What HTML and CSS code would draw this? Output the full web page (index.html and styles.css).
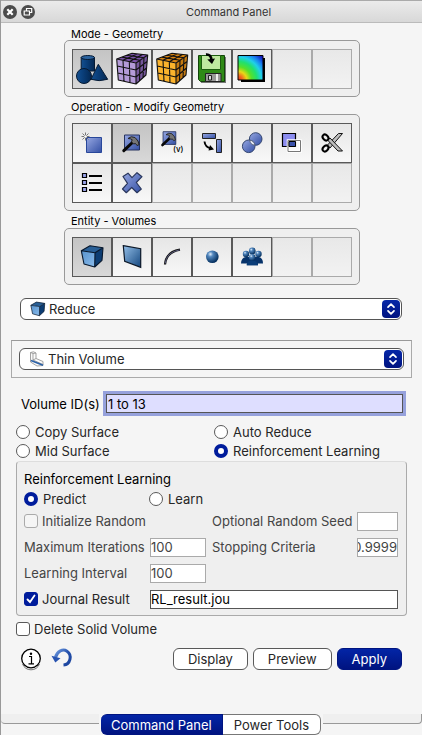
FILE: index.html
```html
<!DOCTYPE html>
<html lang="en">
<head>
<meta charset="utf-8">
<meta name="viewport" content="width=device-width, initial-scale=1">
<title>Command Panel</title>
<link rel="stylesheet" href="styles.css">
</head>
<body>
<svg class="defs" aria-hidden="true">
  <defs>
    <linearGradient id="navy" x1="0" y1="0" x2="1" y2="0"><stop offset="0" stop-color="#15508f"/><stop offset=".35" stop-color="#0b417e"/><stop offset="1" stop-color="#032752"/></linearGradient>
    <linearGradient id="peri" x1="0" y1="0" x2="1" y2="1"><stop offset="0" stop-color="#97a8e2"/><stop offset="1" stop-color="#334fa4"/></linearGradient>
    <linearGradient id="steel" x1="0" y1="0" x2="1" y2="1"><stop offset="0" stop-color="#94bfe8"/><stop offset="1" stop-color="#14477f"/></linearGradient>
    <linearGradient id="face" x1="0" y1="0" x2="1" y2="1"><stop offset="0" stop-color="#5792cc"/><stop offset="1" stop-color="#8bbcec"/></linearGradient>
    <radialGradient id="ball" cx=".35" cy=".3" r=".7"><stop offset="0" stop-color="#e3f0fc"/><stop offset=".3" stop-color="#5287be"/><stop offset="1" stop-color="#05305f"/></radialGradient>
    <radialGradient id="rainbow" cx="0" cy="1" r="1.35"><stop offset="0" stop-color="#e8281c"/><stop offset=".13" stop-color="#f06a20"/><stop offset=".26" stop-color="#e8d818"/><stop offset=".4" stop-color="#58e028"/><stop offset=".56" stop-color="#20e070"/><stop offset=".7" stop-color="#20d0e8"/><stop offset=".84" stop-color="#1880f0"/><stop offset="1" stop-color="#1010b8"/></radialGradient>
    <linearGradient id="undo" x1="0" y1="0" x2="1" y2="1"><stop offset="0" stop-color="#6f9be0"/><stop offset=".5" stop-color="#2450ac"/><stop offset="1" stop-color="#1a439c"/></linearGradient>
    <symbol id="block" viewBox="8 7 25 25">
      <path d="M9.3 13.7 18 8.7 31 10.7 23 15.7Z" fill="#295f96"/>
      <path d="M9.3 13.7 23 15.7 22.7 30 12 27Z" fill="url(#face)"/>
      <path d="M23 15.7 31 10.7 30 23.3 22.7 30Z" fill="#0d3d73"/>
      <path d="M9.3 13.7 18 8.7 31 10.7 30 23.3 22.7 30 12 27ZM9.3 13.7 23 15.7 31 10.7M23 15.7 22.7 30" fill="none" stroke="#07172c" stroke-width="1.1" stroke-linejoin="round"/>
    </symbol>
    <symbol id="meshlines" viewBox="0 0 40 40">
      <path d="M4.7 10 20 4.3 35.7 6 34 26 24 35 6.3 31ZM4.7 10 24 14 35.7 6M24 14V35M11 11.3 12 32.3M17.3 12.7 18 33.7M5.2 17 24 21 35.1 12.5M5.8 24 24 28 34.5 19M28 11.3 27.5 32M32 8.7 31 29M9.8 8.1 28 11.3M14.9 6.2 32 8.7M11 11.3 25.2 4.9M17.3 12.7 30.4 5.4" fill="none" stroke="#111" stroke-width="1.1" stroke-linejoin="round"/>
    </symbol>
    <symbol id="hammer" viewBox="0 0 20 20">
      <path d="M3 2H18V17H3Z" fill="url(#peri)" stroke="#26335f" stroke-width="1"/>
      <path d="M2.300 17.700 12 8.500" stroke="#080808" stroke-width="3" stroke-linecap="round"/>
      <path d="M6.500 5.500Q9.500 2.500 13.500 4.500L16.500 8 17.600 11.700 15.500 12.500 14 10.500 12 11 10 8.800 10.700 6.700Q9 5.500 6.500 5.500Z" fill="#757575" stroke="#222" stroke-width="1"/>
    </symbol>
    <symbol id="updown" viewBox="0 0 18 18">
      <path d="M6 7.2 9 4.2 12 7.2M6 10.8 9 13.8 12 10.8" fill="none" stroke="#fff" stroke-width="1.7" stroke-linecap="round" stroke-linejoin="round"/>
    </symbol>
  </defs>
</svg>

<main class="panel">
  <header class="titlebar">
    <div class="window-tools">
      <button type="button" aria-label="Close"><svg viewBox="0 0 14 14"><circle cx="7" cy="7" r="7" fill="#4b4b4b"/><path d="M4.3 4.3 9.7 9.7M9.7 4.3 4.3 9.7" stroke="#fff" stroke-width="2.2"/></svg></button>
      <button type="button" aria-label="Float"><svg viewBox="0 0 14 14"><circle cx="7" cy="7" r="7" fill="#4b4b4b"/><path d="M5.5 5.5V3.5H10.7V7.5H8.8M3.2 6H8.5V10H3.2Z" fill="none" stroke="#fff" stroke-width="1.2"/></svg></button>
    </div>
    <h1>Command Panel</h1>
  </header>

  <div class="toolgroups">
    <section class="toolgroup">
      <h2>Mode - Geometry</h2>
      <div class="cells">
        <button type="button" class="active" aria-label="Geometry"><svg viewBox="1 1 38 38"><g fill="url(#navy)" stroke="#061a33" stroke-width="1"><path d="M9.2 8.5V22H22.5V8.5Z"/><ellipse cx="15.8" cy="8.5" rx="6.7" ry="2" fill="#2a629e"/><path d="M26.3 15.3 35.7 30.3Q27 33 19 30.3Z"/><circle cx="12" cy="27" r="7.5"/></g></svg></button>
        <button type="button" aria-label="Mesh"><svg viewBox="1 1 38 38"><path d="M4.7 10 20 4.3 35.7 6 24 14Z" fill="#7a52a8"/><path d="M4.7 10 24 14V35L6.3 31Z" fill="#b49bd8"/><path d="M24 14 35.7 6 34 26 24 35Z" fill="#75579b"/><use href="#meshlines" width="40" height="40"/></svg></button>
        <button type="button" aria-label="Analysis groups"><svg viewBox="1 1 38 38"><path d="M4.7 10 20 4.3 35.7 6 24 14Z" fill="#d8830f"/><path d="M4.7 10 24 14V35L6.3 31Z" fill="#fbb32c"/><path d="M24 14 35.7 6 34 26 24 35Z" fill="#c57b12"/><use href="#meshlines" width="40" height="40"/></svg></button>
        <button type="button" aria-label="Export"><svg viewBox="1 1 38 38"><path d="M8 8H34V34H9Z" fill="#777"/><path d="M6.5 6.5H32.5V32.5H8.5L6.5 30.5Z" fill="#2f8a17" stroke="#12440a"/><path d="M9.5 6.5H28.5V20.5H9.5Z" fill="#bfe9a0" stroke="#1d5c10"/><path d="M13.5 24.5H29V32.5H13.5Z" fill="#9a9a9a" stroke="#222"/><path d="M16.5 26.5H19.5V31H16.5Z" fill="#ddd" stroke="#222"/><path d="M25 25V32" stroke="#eee" stroke-width="2"/><path d="M14 5.5Q19 5 19.5 11" fill="none" stroke="#000" stroke-width="2.6"/><path d="M15.3 10.5 23 9.5 20 15Z"/></svg></button>
        <button type="button" aria-label="Post processing"><svg viewBox="1 1 38 38"><path d="M9 9H33V33H9Z"/><path d="M6 6.5H31V31H6Z" fill="url(#rainbow)" stroke="#000"/></svg></button>
        <button type="button" disabled aria-label="Empty"></button>
        <button type="button" disabled aria-label="Empty"></button>
      </div>
    </section>

    <section class="toolgroup">
      <h2>Operation - Modify Geometry</h2>
      <div class="cells">
        <button type="button" aria-label="Create"><svg viewBox="1 1 38 38"><path d="M14.5 14.5H29.5V29.5H14.5Z" fill="url(#peri)" stroke="#28479a"/><path d="M13.5 9.5V17.5M9.5 13.5H17.5M10.5 10.5 16.5 16.5M16.5 10.5 10.5 16.5" stroke="#777"/><circle cx="13.5" cy="13.5" r="1.3" fill="#fff"/></svg></button>
        <button type="button" class="active" aria-label="Modify"><svg viewBox="1 1 38 38"><use href="#hammer" x="9.5" y="10" width="20" height="20"/></svg></button>
        <button type="button" aria-label="Modify virtual"><svg viewBox="1 1 38 38"><use href="#hammer" x="8.5" y="7" width="17" height="17"/><text x="21" y="29" class="icon-text">(v)</text></svg></button>
        <button type="button" aria-label="Transform"><svg viewBox="1 1 38 38"><g fill="url(#peri)" stroke="#222"><path d="M10.5 10.5H23.5V15.5H10.5Z"/><path d="M24.5 16.5H29.5V29.5H24.5Z"/></g><path d="M12.5 18.5Q13 24 19 25.5" fill="none" stroke="#000" stroke-width="1.9"/><path d="M18 22 22 26.500 16.5 27.5Z"/></svg></button>
        <button type="button" aria-label="Boolean"><svg viewBox="1 1 38 38"><g fill="url(#peri)" stroke="#34466f"><circle cx="23.7" cy="16" r="6.3"/><circle cx="16.7" cy="23.3" r="6.3"/></g><path d="M17.6 17.2Q22.3 17.5 22.9 22.3 18.2 21.8 17.6 17.2Z" fill="#e5e9f3" stroke="#596680"/></svg></button>
        <button type="button" aria-label="Imprint"><svg viewBox="1 1 38 38"><path d="M10.5 10.5H23.5V23.5H10.5Z" fill="#8c8df0" stroke="#000" stroke-width="1.2"/><path d="M16 17.5H28.5V28.5H16Z" fill="none" stroke="#fff" stroke-width="2.6"/><path d="M16 17.5H28.5V28.5H16Z" fill="#fff" fill-opacity=".5" stroke="#777"/><path d="M17 18.5H23.5V23.5H17Z" fill="#3a51aa" stroke="#000"/></svg></button>
        <button type="button" aria-label="Cut"><svg viewBox="1 1 38 38"><path d="M30.5 10.5 26.5 10.5 15.5 22 18 25Z" fill="#bdbdbd" stroke="#111"/><path d="M30.5 28 26 28 15.5 17 18 15Z" fill="#bdbdbd" stroke="#111"/><g fill="none" stroke="#000" stroke-width="2"><ellipse cx="13.5" cy="14.5" rx="3.3" ry="2.5" transform="rotate(45 13.5 14.5)"/><ellipse cx="13.5" cy="25.500" rx="3.3" ry="2.5" transform="rotate(-45 13.5 25.5)"/></g></svg></button>
        <button type="button" aria-label="List"><svg viewBox="1 1 38 38"><g fill="#9aa3ea" stroke="#000" stroke-width="1.2"><path d="M10.5 10.5H14.5V14.5H10.5Z"/><path d="M10.5 17.5H14.5V21.5H10.5Z"/><path d="M10.5 24.5H14.5V28.5H10.5Z"/></g><path d="M17 13H30M17 20H30M17 27H30" stroke="#000" stroke-width="1.8"/></svg></button>
        <button type="button" aria-label="Delete"><svg viewBox="1 1 38 38"><path d="M11 13.5 16 10.2 20 14.700 25 9.700 30 13.700 24.300 19.500 29.300 26 25 29.700 19.700 24.500 14.300 29.700 10.500 26 15.500 20.300Z" fill="url(#peri)" stroke="#29365c" stroke-width="1.2" stroke-linejoin="round"/></svg></button>
        <button type="button" disabled aria-label="Empty"></button>
        <button type="button" disabled aria-label="Empty"></button>
        <button type="button" disabled aria-label="Empty"></button>
        <button type="button" disabled aria-label="Empty"></button>
        <button type="button" disabled aria-label="Empty"></button>
      </div>
    </section>

    <section class="toolgroup">
      <h2>Entity - Volumes</h2>
      <div class="cells">
        <button type="button" class="active" aria-label="Volume"><svg viewBox="1 1 38 38"><use href="#block" x="8" y="7" width="25" height="25"/></svg></button>
        <button type="button" aria-label="Surface"><svg viewBox="1 1 38 38"><path d="M11.3 8.7 28.7 11.7V30.3L12.7 24.3Z" fill="url(#steel)" stroke="#0c1828" stroke-width="1.2"/></svg></button>
        <button type="button" aria-label="Curve"><svg viewBox="1 1 38 38"><path d="M13 27.5Q14 15 28 12.7" fill="none" stroke="#111" stroke-width="2.2"/><path d="M13.2 26.5Q14.2 15.2 27.5 12.9" fill="none" stroke="#6f7199" stroke-width=".8"/></svg></button>
        <button type="button" aria-label="Vertex"><svg viewBox="1 1 38 38"><circle cx="20.3" cy="19.7" r="6.3" fill="url(#ball)"/></svg></button>
        <button type="button" aria-label="Group"><svg viewBox="1 1 38 38"><path d="M9 26.5Q9.5 20 14 20H27Q31 21 31 26.5H26V28.3H15V26.5Z" fill="#07336a"/><g fill="url(#ball)"><circle cx="20.3" cy="14" r="3.4"/><circle cx="14" cy="17" r="3.2"/><circle cx="26.5" cy="17" r="3.2"/><circle cx="20.3" cy="20.5" r="3.4"/></g><path d="M14.5 28.3Q15 23.5 20.3 23.5T26 28.3Z" fill="#0a3d78"/></svg></button>
        <button type="button" disabled aria-label="Empty"></button>
        <button type="button" disabled aria-label="Empty"></button>
      </div>
    </section>
  </div>

  <form class="command">
    <div class="picker action">
      <select aria-label="Action"><option>Reduce</option></select>
      <svg class="picker-icon" viewBox="0 0 16 16"><use href="#block" width="16" height="16"/></svg>
      <svg class="picker-arrows"><use href="#updown"/></svg>
    </div>

    <div class="frame">
      <div class="picker">
        <select aria-label="Reduction type"><option>Thin Volume</option></select>
        <svg class="picker-icon" viewBox="0 0 16 16"><path d="M1.500 1.500 4.500 .8 7 2V7.500L14 10.500V14.500L8 15 1.500 11ZM1.500 1.500 4 2.500V9L14 13.500M4 2.500 7 2M4 9 7 7.500" fill="#fafafa" stroke="#999" stroke-width=".9"/><path d="M2 9.500 14 14.200" stroke="#2c62a8" stroke-width="1.6"/></svg>
        <svg class="picker-arrows"><use href="#updown"/></svg>
      </div>
    </div>

    <div class="ids">
      <label for="ids">Volume ID(s)</label>
      <input id="ids" type="text" value="1 to 13">
    </div>

    <div class="methods">
      <label class="choice"><input type="radio" name="method">Copy Surface</label>
      <label class="choice"><input type="radio" name="method">Auto Reduce</label>
      <label class="choice"><input type="radio" name="method">Mid Surface</label>
      <label class="choice"><input type="radio" name="method" checked>Reinforcement Learning</label>
    </div>

    <section class="learning">
      <h3>Reinforcement Learning</h3>
      <div class="row short">
        <label class="choice"><input type="radio" name="rl" checked>Predict</label>
        <label class="choice"><input type="radio" name="rl">Learn</label>
      </div>
      <div class="row dim">
        <label class="choice wide"><input type="checkbox" disabled>Initialize Random</label>
        <label for="seed">Optional Random Seed</label>
        <input id="seed" type="text" disabled>
      </div>
      <div class="row dim">
        <label for="iterations">Maximum Iterations</label>
        <input id="iterations" type="text" value="100" disabled>
        <label for="criteria">Stopping Criteria</label>
        <input id="criteria" class="tail" type="text" value="0.9999" disabled>
      </div>
      <div class="row dim">
        <label for="interval">Learning Interval</label>
        <input id="interval" type="text" value="100" disabled>
      </div>
      <div class="row">
        <label class="choice"><input type="checkbox" checked>Journal Result</label>
        <input class="journal" type="text" aria-label="Journal file" value="RL_result.jou">
      </div>
    </section>

    <label class="choice delete"><input type="checkbox">Delete Solid Volume</label>

    <div class="actions">
      <button type="button" class="glyph" aria-label="Information"><svg viewBox="0 0 22 24"><path d="M2.5 17Q5 22.8 11 22.8T19.5 17" fill="none" stroke="#777"/><circle cx="11" cy="11.5" r="9.3" fill="#fff" stroke="#000" stroke-width="1.3"/><circle cx="11" cy="6.7" r="1.2"/><path d="M9 9.5H11.5V16.5M8.5 16.8H14" fill="none" stroke="#000" stroke-width="1.2"/></svg></button>
      <button type="button" class="glyph undo" aria-label="Reset"><svg viewBox="0 0 22 24"><path d="M4.5 10.5C6 4 12 1.5 16 4.2C21.5 8 19.5 17.5 12.5 18" fill="none" stroke="url(#undo)" stroke-width="3"/><path d="M.5 8.8 9.5 11.2 4.3 15.5Z" fill="#2753b0"/></svg></button>
      <span class="spacer"></span>
      <button type="button" class="push">Display</button>
      <button type="button" class="push">Preview</button>
      <button type="submit" class="push primary">Apply</button>
    </div>
  </form>

  <footer class="tabs">
    <span class="edge left"></span>
    <button type="button" class="tab selected">Command Panel</button>
    <button type="button" class="tab">Power Tools</button>
    <span class="edge right"></span>
  </footer>
</main>
</body>
</html>
```
FILE: styles.css
```css
* { box-sizing: border-box; }

body {
  margin: 0;
  background: #f5f5f5;
  color: #262626;
  font: 13px/16px Inter, "Liberation Sans", sans-serif;
}

button, input, select { font: inherit; color: inherit; margin: 0; }
h1, h2, h3 { margin: 0; font-weight: 400; }
svg { display: block; }
.defs { position: absolute; width: 0; height: 0; }

.panel {
  display: flex;
  flex-direction: column;
  min-height: 100vh;
  border-left: 1px solid #999;
}

.titlebar {
  display: grid;
  grid-template-columns: 64px 1fr 30px;
  align-items: center;
  height: 23px;
  border-top: 1px solid #aaa;
  border-bottom: 1px solid #bbb;
  background: linear-gradient(#ebebeb, #d8d8d8);
}
.titlebar h1 { font-size: 11px; text-align: center; color: #333; }
.window-tools { display: flex; gap: 4px; padding-left: 2px; }
.window-tools button { width: 14px; height: 14px; padding: 0; border: 0; background: none; }

.toolgroups {
  display: flex;
  flex-direction: column;
  align-items: center;
  padding: 4px 0 0 1px;
}
.toolgroup { width: 296px; }
.toolgroup h2 {
  height: 17px;
  padding: 3px 0 0 7px;
  font-size: 11px;
  line-height: 14px;
  color: #000;
}
.toolgroup:first-child h2 { height: 13px; padding-top: 0; }
.cells {
  display: grid;
  grid-template-columns: repeat(7, 40px);
  grid-auto-rows: 40px;
  padding: 8px 7px 7px;
  border: 1px solid #999;
  border-radius: 5px;
  background: #efefef;
}
.cells button {
  padding: 0;
  border: 1px solid #595959;
  background: linear-gradient(#e6e6e6, #f8f8f8);
}
.cells button.active { background: linear-gradient(#c4c4c4, #d8d8d8); }
.cells button:disabled { border-color: #aaa; background: linear-gradient(#e8e8e8, #f2f2f2); }
.icon-text { font: 500 8px Inter, sans-serif; }

.command { display: flex; flex-direction: column; padding: 13px 10px 0; }

.picker { display: grid; align-items: center; }
.picker > * { grid-area: 1 / 1; }
.picker select {
  appearance: none;
  width: 100%;
  height: 22px;
  padding: 0 24px 0 28px;
  border: 1px solid #555;
  border-radius: 6px;
  background: #fff;
  color: #262626;
}
.picker-icon { width: 16px; height: 16px; margin-left: 10px; pointer-events: none; }
.picker-arrows {
  justify-self: end;
  width: 18px;
  height: 18px;
  margin-right: 2px;
  border-radius: 4px;
  background: linear-gradient(#0527a8, #001380);
  pointer-events: none;
}
.action { margin: 0 10px 0 9px; }
.frame { margin-top: 20px; padding: 7px; border: 1px solid #aaa; border-top-color: #999; }

.ids { display: flex; align-items: center; margin-top: 16px; padding: 0 9px 0 10px; }
.ids label { flex: 0 0 85px; color: #000; }

input[type="text"] {
  width: 100%;
  min-width: 0;
  height: 19px;
  padding: 0;
  border: 1px solid #555;
  border-radius: 0;
  background: #fff;
  color: #000;
}
input[type="text"]:disabled { border-color: #aaa; color: #444; }
.ids input[type="text"] {
  padding: 0 1px;
  outline: 3px solid #96a1dc;
  background: #dedeff;
}

.choice { display: flex; align-items: center; gap: 5px; }
.choice input {
  appearance: none;
  flex: none;
  width: 14px;
  height: 14px;
  border: 1px solid #595959;
  background: #fff;
}
.choice input[type="radio"] { border-radius: 50%; }
.choice input[type="radio"]:checked { border: 4px solid #001c9c; }
.choice:has([type="checkbox"]) { gap: 4px; }
.choice input[type="checkbox"] { border-radius: 3px; }
.choice input[type="checkbox"]:disabled { border-color: #aaa; background: #f5f5f5; }
.choice input[type="checkbox"]:checked {
  border-color: #001c9c;
  background: #001c9c url("data:image/svg+xml,%3Csvg xmlns='http://www.w3.org/2000/svg' viewBox='0 0 12 12'%3E%3Cpath d='M2.5 6.5 5 9 9.5 2.5' fill='none' stroke='white' stroke-width='1.8' stroke-linecap='round'/%3E%3C/svg%3E");
}

.methods {
  display: grid;
  grid-template-columns: 1fr 1fr;
  column-gap: 4px;
  grid-auto-rows: 19px;
  margin-top: 9px;
  padding: 0 4px 0 5px;
}

.learning {
  margin: 1px 5px 0;
  padding: 7px 8px 3px;
  border: 1px solid #aaa;
  border-top-color: #ddd;
  border-radius: 4px;
  background: #efefef;
}
.learning h3 { height: 20px; margin-left: -1px; font-size: 13px; line-height: 20px; color: #000; }
.row {
  display: grid;
  grid-template-columns: 126px 56px 1fr 41px;
  align-items: center;
  height: 26px;
  margin-left: -1px;
}
.row.short { grid-template-columns: 125px 1fr; height: 19px; }
.row.dim { color: #444; }
.row [for="seed"], .row [for="criteria"] { padding-left: 6px; }
.wide { grid-column: span 2; }
.row input.tail { direction: rtl; }
.row input.journal { grid-column: 2 / 5; }

.delete { margin: 5px 5px 0; }
.actions { display: flex; align-items: center; gap: 5px; margin-top: 10px; padding: 0 10px 0 9px; }
.glyph { width: 22px; height: 24px; padding: 0; border: 0; background: none; }
.undo { margin-left: 4px; }
.spacer { flex: 1; }
.push {
  height: 22px;
  padding: 0 14px;
  border: 1px solid #595959;
  border-radius: 6px;
  background: #fff;
  line-height: 16px;
}
.push.primary { border-color: #001480; background: linear-gradient(#0325a6, #001380); color: #fff; }

.tabs { display: flex; margin-top: auto; height: 21px; }
.edge { flex: 1; height: 10px; border-bottom: 1px solid #999; background: #efefef; }
.edge.left { margin-right: 2px; border-bottom-left-radius: 4px; }
.edge.right { margin-left: 2px; border-bottom-right-radius: 4px; border-right: 1px solid #999; }
.tab {
  padding: 0 11px;
  border: 1px solid #777;
  border-left: 0;
  border-radius: 0 6px 6px 0;
  background: #fff;
}
.tab.selected {
  padding: 0 10px;
  border-color: #001480;
  border-radius: 6px 0 0 6px;
  background: linear-gradient(#0325a6, #001380);
  color: #fff;
}
```
